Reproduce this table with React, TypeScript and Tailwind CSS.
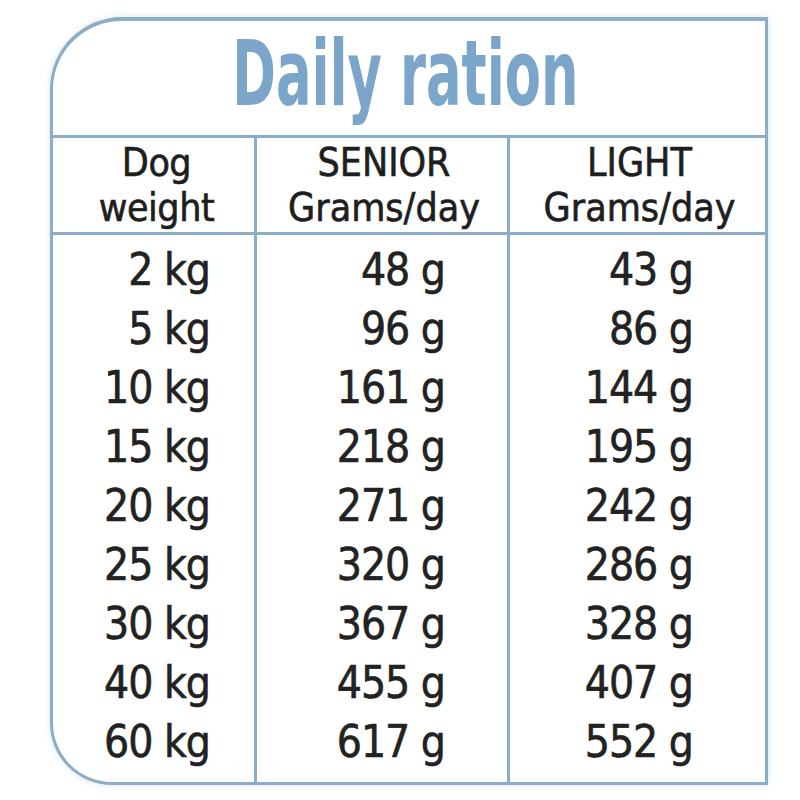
const rows = [
  ["2 kg", "48 g", "43 g"],
  ["5 kg", "96 g", "86 g"],
  ["10 kg", "161 g", "144 g"],
  ["15 kg", "218 g", "195 g"],
  ["20 kg", "271 g", "242 g"],
  ["25 kg", "320 g", "286 g"],
  ["30 kg", "367 g", "328 g"],
  ["40 kg", "455 g", "407 g"],
  ["60 kg", "617 g", "552 g"],
];

const cond = "font-['DejaVu_Sans_Condensed','DejaVu_Sans',sans-serif] [-webkit-text-stroke:0.6px_#222]";

export default function App() {
  return (
    <div className="w-[800px] h-[800px] bg-white pt-[17px] pl-[50px]">
      <div className="w-[718px] h-[768px] border-[3px] border-t-4 border-[#8badc7] rounded-tl-[72px] rounded-bl-[62px] bg-white shadow-[0_0_6px_rgba(140,180,210,0.35)] flex flex-col overflow-hidden">
        {/* titulo */}
        <div className="h-[117px] flex items-start justify-center pr-[8px] border-b-[3px] border-[#8badc7]">
          <h1 className="font-['DejaVu_Sans_Condensed','DejaVu_Sans',sans-serif] font-bold text-[90px] leading-[1] text-[#7ba6ca] mt-[8px] scale-x-[0.65] whitespace-nowrap">
            Daily ration
          </h1>
        </div>

        {/* cabecera */}
        <div className={`h-[97px] grid grid-cols-[201px_253px_1fr] border-b-[3px] border-[#8badc7] text-[39px] leading-[45px] text-[#1e1e1e] ${cond}`}>
          <div className="flex flex-col items-center justify-center pl-[6px] tracking-[-0.5px]">
            <span>Dog</span>
            <span>weight</span>
          </div>
          <div className="flex flex-col items-center justify-center border-l-[3px] border-[#8badc7] pl-[4px]">
            <span>SENIOR</span>
            <span>Grams/day</span>
          </div>
          <div className="flex flex-col items-center justify-center border-l-[3px] border-[#8badc7] pl-[4px]">
            <span>LIGHT</span>
            <span>Grams/day</span>
          </div>
        </div>

        {/* filas */}
        <div className={`flex-1 grid grid-cols-[201px_253px_1fr] text-[44px] text-[#222] tracking-[-1px] ${cond}`}>
          <div className="pt-[5px] pr-[44px] flex flex-col items-end">
            {rows.map((r) => (
              <div key={r[0]} className="h-[59px] leading-[59px]">{r[0]}</div>
            ))}
          </div>
          <div className="pt-[5px] pr-[62px] flex flex-col items-end border-l-[3px] border-[#8badc7]">
            {rows.map((r) => (
              <div key={r[0]} className="h-[59px] leading-[59px]">{r[1]}</div>
            ))}
          </div>
          <div className="pt-[5px] pr-[72px] flex flex-col items-end border-l-[3px] border-[#8badc7]">
            {rows.map((r) => (
              <div key={r[0]} className="h-[59px] leading-[59px]">{r[2]}</div>
            ))}
          </div>
        </div>
      </div>
    </div>
  );
}
